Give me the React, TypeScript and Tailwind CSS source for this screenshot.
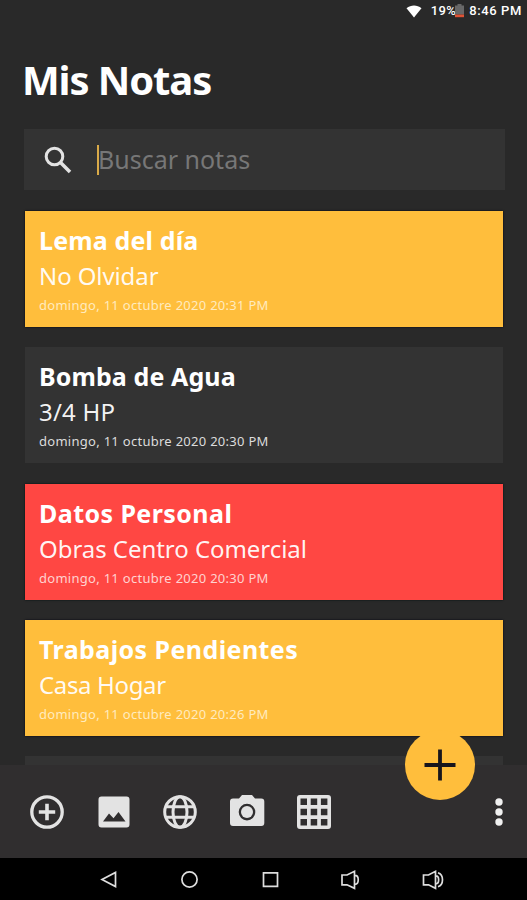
import type { ReactNode } from 'react';
import clsx from 'clsx';

type Note = {
  title: string;
  body: string;
  date: string;
  card: string;
  titleFit: string;
  bodyFit: string;
  dateColor: string;
};

const notes: Note[] = [
  {
    title: 'Lema del día',
    body: 'No Olvidar',
    date: 'domingo, 11 octubre 2020 20:31 PM',
    card: 'bg-[#ffbe3c] shadow-[0_0_2px_#050510]',
    titleFit: 'tracking-[0.15px]',
    bodyFit: 'tracking-[-0.1px]',
    dateColor: 'text-[#ffebbf]',
  },
  {
    title: 'Bomba de Agua',
    body: '3/4 HP',
    date: 'domingo, 11 octubre 2020 20:30 PM',
    card: 'bg-[#333333]',
    titleFit: 'tracking-[0.1px]',
    bodyFit: 'tracking-[0.2px]',
    dateColor: 'text-[#dcdcdc]',
  },
  {
    title: 'Datos Personal',
    body: 'Obras Centro Comercial',
    date: 'domingo, 11 octubre 2020 20:30 PM',
    card: 'bg-[#ff4743] shadow-[0_0_2px_#001010]',
    titleFit: 'tracking-[0.43px]',
    bodyFit: 'tracking-[-0.05px]',
    dateColor: 'text-[#ffd2d0]',
  },
  {
    title: 'Trabajos Pendientes',
    body: 'Casa Hogar',
    date: 'domingo, 11 octubre 2020 20:26 PM',
    card: 'bg-[#ffbe3c] shadow-[0_0_2px_#050510]',
    titleFit: 'tracking-[0.42px]',
    bodyFit: 'tracking-[-0.35px]',
    dateColor: 'text-[#ffebbf]',
  },
];

function NoteCard({ note }: { note: Note }) {
  return (
    <article
      className={clsx('h-[116px] shrink-0 whitespace-nowrap pl-[14px] pt-[11px] text-white', note.card)}
    >
      <h2 className={clsx('text-[25px] font-bold leading-[36px]', note.titleFit)}>{note.title}</h2>
      <p className={clsx('text-[24px] leading-[35px] text-white/95', note.bodyFit)}>{note.body}</p>
      <p className={clsx('text-[13px] leading-[24px] tracking-[0.28px]', note.dateColor)}>{note.date}</p>
    </article>
  );
}

function ToolButton({ label, children }: { label: string; children: ReactNode }) {
  return (
    <button aria-label={label} className="size-[40px] text-[#e3e3e3]">
      <svg viewBox="0 0 40 40" className="size-full" fill="currentColor">
        {children}
      </svg>
    </button>
  );
}

function StatusBar() {
  return (
    <div className="flex h-[22px] shrink-0 items-center justify-end pr-[5px] font-[Roboto] text-[13px] font-medium text-white">
      <svg viewBox="0 0 16 13" className="mr-[9px] h-[13px] w-[16px]" fill="#fff">
        <path d="M0.5 3.2C5 -0.3 11 -0.3 15.500 3.200L8 12.500Z" />
      </svg>
      <span className="-mr-px tracking-[0.4px]">19%</span>
      <svg viewBox="0 0 9 14" className="mr-[5px] h-[14px] w-[9px]">
        <path d="M2.500 0h4v1.500h2.500v9h-9v-9h2.500z" fill="#686868" />
        <path d="M0 10.500h9v2.700h-9z" fill="#df5335" />
      </svg>
      <span className="tracking-[0.6px]">8:46 PM</span>
    </div>
  );
}

function Toolbar() {
  return (
    <footer className="relative flex h-[93px] shrink-0 items-center bg-[#302e2f] pl-[27px]">
      <div className="flex items-center gap-[26.7px]">
        <ToolButton label="Agregar">
          <circle cx="20" cy="20" r="15.200" fill="none" stroke="currentColor" strokeWidth="3.300" />
          <path d="M18.200 11.800h3.600v6.400h6.400v3.600h-6.400v6.400h-3.600v-6.400h-6.400v-3.600h6.400z" />
        </ToolButton>
        <ToolButton label="Imagen">
          <path
            fillRule="evenodd"
            d="M7.500 4.500h25a3 3 0 0 1 3 3v25a3 3 0 0 1-3 3h-25a3 3 0 0 1-3-3v-25a3 3 0 0 1 3-3zM9 29.500h22.500l-7-9.500-5 6.200-4.500-4.700z"
          />
        </ToolButton>
        <ToolButton label="Web">
          <g fill="none" stroke="currentColor" strokeWidth="3">
            <circle cx="20" cy="20" r="15.300" />
            <ellipse cx="20" cy="20" rx="7" ry="15.300" />
            <path d="M6 14.800h28M6 25.200h28" />
          </g>
        </ToolButton>
        <ToolButton label="Cámara">
          <path
            fillRule="evenodd"
            d="M15 3h10l3 3.500h6.300a3 3 0 0 1 3 3v21.500a3 3 0 0 1-3 3H6a3 3 0 0 1-3-3V9.500a3 3 0 0 1 3-3h6zM20 11.800a8.300 8.300 0 1 0 0 16.600a8.300 8.300 0 1 0 0-16.600z"
          />
          <circle cx="20" cy="20.100" r="6" />
        </ToolButton>
        <ToolButton label="Cuadrícula">
          <path
            fillRule="evenodd"
            d="M6 3h28a3 3 0 0 1 3 3v28a3 3 0 0 1-3 3H6a3 3 0 0 1-3-3V6a3 3 0 0 1 3-3zM6.500 6.500v6.500h6.500V6.500zM16.700 6.500v6.500h6.500V6.500zM26.900 6.500v6.500h6.500V6.500zM6.500 16.700v6.500h6.500v-6.500zM16.700 16.700v6.500h6.500v-6.500zM26.900 16.700v6.500h6.500v-6.500zM6.500 26.900v6.500h6.500v-6.500zM16.700 26.900v6.500h6.500v-6.500zM26.900 26.900v6.500h6.500v-6.500z"
          />
        </ToolButton>
      </div>
      <button aria-label="Más opciones" className="ml-auto mr-[24px]">
        <svg viewBox="0 0 8 28" className="h-[28px] w-[8px]" fill="#f0f0f0">
          <circle cx="4" cy="4" r="3.700" />
          <circle cx="4" cy="14" r="3.700" />
          <circle cx="4" cy="24" r="3.700" />
        </svg>
      </button>

      {/* Floating add button, overlaps the list */}
      <button
        aria-label="Nueva nota"
        className="absolute -top-[35px] left-[405px] size-[70px] rounded-full bg-[#ffbe3c]"
      >
        <svg viewBox="0 0 70 70" className="size-full">
          <path d="M35 19.500v31M19.500 35h31" stroke="#17151c" strokeWidth="3.800" />
        </svg>
      </button>
    </footer>
  );
}

function NavBar() {
  return (
    <nav className="flex h-[42px] shrink-0 items-center gap-[57px] bg-black pl-[97px]">
      <svg viewBox="0 0 24 24" className="size-[24px]" fill="none" stroke="#dedede" strokeWidth="1.700">
        <path d="M5 12.500L18.500 5.500v14z" />
      </svg>
      <svg viewBox="0 0 24 24" className="size-[24px]" fill="none" stroke="#dedede" strokeWidth="1.700">
        <circle cx="11.500" cy="12.500" r="7.600" />
      </svg>
      <svg viewBox="0 0 24 24" className="size-[24px]" fill="none" stroke="#dedede" strokeWidth="1.700">
        <path d="M4.500 5.800h14v13.500h-14z" />
      </svg>
      <svg viewBox="0 0 24 24" className="size-[24px]" fill="none" stroke="#dedede" strokeWidth="1.700">
        <path d="M2 8h5l7.500-3.700v17L7 17.800H2zM15 8.300c4.300 0 4.300 9 0 9" />
      </svg>
      <svg viewBox="0 0 24 24" className="size-[24px]" fill="none" stroke="#dedede" strokeWidth="1.700">
        <path d="M2.500 8h5l7-3.700v17l-7-3.500h-5zM15 8.800c3.500 0 3.500 8 0 8M17 5.800c6 2 6 12 0 14" />
      </svg>
    </nav>
  );
}

export default function App() {
  return (
    <div className="flex h-[900px] w-[527px] flex-col overflow-hidden bg-[#292929] font-['Noto_Sans',sans-serif]">
      <StatusBar />
      <main className="flex min-h-0 flex-1 flex-col overflow-hidden pl-[24px] pr-[22px]">
        <h1 className="mt-[28px] -ml-[2px] h-[60px] whitespace-nowrap text-[40px] font-bold leading-[60px] tracking-[-1.1px] text-white">
          Mis Notas
        </h1>

        <div className="mt-[19px] flex h-[61px] shrink-0 items-center bg-[#333333] pl-[20px]">
          <svg viewBox="0 0 28 28" className="size-[28px]" fill="none" stroke="#e3e3e3" strokeWidth="3">
            <circle cx="10.500" cy="10.500" r="8.300" />
            <path d="M16.500 16.500l9.500 9.500" strokeWidth="3.500" />
          </svg>
          <span className="ml-[25px] h-[30px] w-[2px] bg-[#d9aa48]" />
          <span className="-ml-px -mt-[2px] whitespace-nowrap text-[25px] leading-[34px] text-[#777777]">
            Buscar notas
          </span>
        </div>

        <section className="ml-px mr-[2px] mt-[21px] flex flex-col gap-[20.3px]">
          {notes.map((note) => (
            <NoteCard key={note.title} note={note} />
          ))}
          <div className="h-[116px] shrink-0 bg-[#333333]" />
        </section>
      </main>
      <Toolbar />
      <NavBar />
    </div>
  );
}
